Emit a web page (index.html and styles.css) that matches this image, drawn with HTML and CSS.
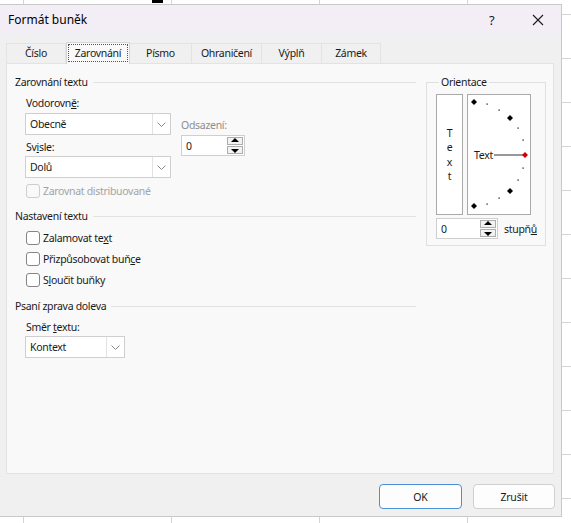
FILE: index.html
```html
<!DOCTYPE html>
<html lang="cs">
  <head>
    <meta charset="UTF-8" />
    <title>Formát buněk</title>
    <link rel="stylesheet" href="styles.css">
  </head>
  <body>
    <div class="sheet-mark"></div>
    <div class="dialog">
      <div class="titlebar">
        <span class="title">Formát buněk</span>
        <span class="help">?</span>
        <span class="close">
          <svg width="12" height="12" viewBox="0 0 12 12"><path d="M1 1L11 11M11 1L1 11" stroke="#1a1a1a" stroke-width="1.1" fill="none"/></svg>
        </span>
      </div>

      <div class="tabs">
        <div class="tab">Číslo</div>
        <div class="tab active"><span class="focus">Zarovnání</span></div>
        <div class="tab">Písmo</div>
        <div class="tab">Ohraničení</div>
        <div class="tab">Výplň</div>
        <div class="tab">Zámek</div>
      </div>

      <div class="panel">
        <div class="left">
          <div class="group-title"><span>Zarovnání textu</span></div>
          <div class="label first">Vodorovn<u>ě</u>:</div>
          <div class="align-row">
            <div class="align-col">
              <div class="select wide">
                <span class="value">Obecně</span>
                <span class="arrow"><svg width="9" height="5" viewBox="0 0 9 5"><path d="M0.5 0.5L4.5 4.5L8.5 0.5" stroke="#8a8a8a" fill="none"/></svg></span>
              </div>
              <div class="label vert">Sv<u>i</u>sle:</div>
              <div class="select wide">
                <span class="value">Dolů</span>
                <span class="arrow"><svg width="9" height="5" viewBox="0 0 9 5"><path d="M0.5 0.5L4.5 4.5L8.5 0.5" stroke="#8a8a8a" fill="none"/></svg></span>
              </div>
              <div class="check disabled"><span class="box"></span>Zarovnat distribuované</div>
            </div>
            <div class="indent-col">
              <div class="label muted">Odsazení:</div>
              <div class="spin indent">
                <span class="value">0</span>
                <span class="spin-btns">
                  <span class="spin-btn"><svg width="8" height="6" viewBox="0 0 8 6"><path d="M4 0L8 4H0Z" fill="#000"/></svg></span>
                  <span class="spin-btn"><svg width="8" height="6" viewBox="0 0 8 6"><path d="M0 2H8L4 6Z" fill="#000"/></svg></span>
                </span>
              </div>
            </div>
          </div>

          <div class="group-title second"><span>Nastavení textu</span></div>
          <div class="check first-check"><span class="box"></span>Zalamovat te<u>x</u>t</div>
          <div class="check"><span class="box"></span>Přizpůsobovat buň<u>c</u>e</div>
          <div class="check"><span class="box"></span>S<u>l</u>oučit buňky</div>

          <div class="group-title third"><span>Psaní zprava doleva</span></div>
          <div class="label dir">Směr <u>t</u>extu:</div>
          <div class="select narrow">
            <span class="value">Kontext</span>
            <span class="arrow"><svg width="9" height="5" viewBox="0 0 9 5"><path d="M0.5 0.5L4.5 4.5L8.5 0.5" stroke="#8a8a8a" fill="none"/></svg></span>
          </div>
        </div>

        <fieldset class="orient">
          <legend>Orientace</legend>
          <div class="orient-boxes">
            <div class="vtext">
              <span>T</span><span>e</span><span>x</span><span>t</span>
            </div>
            <div class="dial">
              <svg width="62" height="119" viewBox="1 1 62 119">
                <g fill="#000">
                  <path d="M7 5L10 8L7 11L4 8Z"/>
                  <path d="M43 21L46 24L43 27L40 24Z"/>
                  <path d="M43 94L46 97L43 100L40 97Z"/>
                  <path d="M7 109L10 112L7 115L4 112Z"/>
                  <rect x="19.5" y="9.5" width="1.2" height="1.2"/>
                  <rect x="31.5" y="15.5" width="1.2" height="1.2"/>
                  <rect x="50.5" y="33.5" width="1.2" height="1.2"/>
                  <rect x="55.5" y="45.5" width="1.2" height="1.2"/>
                  <rect x="55.5" y="73.5" width="1.2" height="1.2"/>
                  <rect x="50.5" y="85.5" width="1.2" height="1.2"/>
                  <rect x="31.5" y="103.5" width="1.2" height="1.2"/>
                  <rect x="19.5" y="109.5" width="1.2" height="1.2"/>
                </g>
                <line x1="27" y1="61" x2="56" y2="61" stroke="#333" stroke-width="1"/>
                <path d="M58 58L61 61L58 64L55 61Z" fill="#d40000"/>
                <text x="7" y="65" class="dial-text">Text</text>
              </svg>
            </div>
          </div>
          <div class="degree-row">
            <div class="spin degrees">
              <span class="value">0</span>
              <span class="spin-btns">
                <span class="spin-btn"><svg width="8" height="6" viewBox="0 0 8 6"><path d="M4 0L8 4H0Z" fill="#000"/></svg></span>
                <span class="spin-btn"><svg width="8" height="6" viewBox="0 0 8 6"><path d="M0 2H8L4 6Z" fill="#000"/></svg></span>
              </span>
            </div>
            <span class="unit">stupň<u>ů</u></span>
          </div>
        </fieldset>
      </div>

      <div class="buttons">
        <button class="btn default">OK</button>
        <button class="btn">Zrušit</button>
      </div>
    </div>
  </body>
</html>
```

FILE: styles.css
```css
* {
  box-sizing: border-box;
}

body {
  margin: 0;
  font-family: "Noto Sans", "DejaVu Sans", sans-serif;
  font-size: 10.5px;
  letter-spacing: -0.3px;
  color: #1a1a1a;
  background-color: #fff;
  background-image:
    linear-gradient(to right, #d4d4d4 1px, transparent 1px),
    linear-gradient(to bottom, #d4d4d4 1px, transparent 1px);
  background-size: 148px 100%, 100% 44px;
  background-position: 23px 0, 0 14px;
  height: 523px;
  overflow: hidden;
}

.sheet-mark {
  position: absolute;
  left: 152px;
  top: 0;
  width: 11px;
  height: 3px;
  background: #000;
}

.dialog {
  margin-top: 4px;
  margin-left: -1px;
  width: 563px;
  height: 513px;
  border: 1px solid #c9c9c9;
  background: #f0f0f0;
}

.titlebar {
  height: 29px;
  background: #f3eef6;
  display: flex;
  align-items: center;
  padding-left: 8px;
}

.title {
  font-size: 12px;
  letter-spacing: 0;
  color: #000;
  flex-grow: 1;
}

.help {
  font-size: 13px;
  letter-spacing: 0;
  color: #1a1a1a;
  width: 43px;
}

.close {
  width: 29px;
  display: flex;
}

/* tabs */

.tabs {
  display: flex;
  margin-top: 9px;
  padding-left: 6px;
  height: 20px;
}

.tab {
  height: 20px;
  line-height: 19px;
  text-align: center;
  border: 1px solid #e3e3e3;
  border-bottom: none;
  border-left: none;
  background: #f0f0f0;
}

.tab:first-child {
  border-left: 1px solid #e3e3e3;
}

.tab:nth-child(1) { width: 60px; }
.tab:nth-child(2) { width: 64px; }
.tab:nth-child(3) { width: 62px; }
.tab:nth-child(4) { width: 70px; }
.tab:nth-child(5) { width: 60px; }
.tab:nth-child(6) { width: 59px; }

.tab.active {
  background: #f9f9f9;
  border: 1px solid #d6d6d6;
  border-bottom: none;
  height: 22px;
  margin-top: -1px;
  margin-bottom: -1px;
  padding: 1px;
  position: relative;
}

.focus {
  display: block;
  height: 18px;
  line-height: 17px;
  border: 1px dotted #555;
}

/* panel */

.panel {
  margin-left: 6px;
  width: 548px;
  height: 411px;
  background: #f9f9f9;
  border: 1px solid #e3e3e3;
  display: flex;
  padding-top: 10px;
}

.left {
  width: 409px;
  padding-left: 8px;
}

.group-title {
  display: flex;
  align-items: center;
  height: 16px;
}

.group-title::after {
  content: "";
  flex-grow: 1;
  border-top: 1px solid #e2e2e2;
  margin-left: 5px;
}

.group-title.second {
  margin-top: 10px;
}

.group-title.third {
  margin-top: 11px;
}

.label {
  height: 16px;
  line-height: 16px;
  margin-left: 11px;
}

.label.first {
  margin-top: 5px;
}

.label.vert {
  margin-top: 4px;
  margin-bottom: 1px;
}

.label.dir {
  margin-top: 5px;
}

.label.muted {
  color: #8e8e8e;
  margin-left: 0;
}

.align-row {
  display: flex;
  margin-top: 2px;
  margin-left: 10px;
}

.align-col {
  width: 156px;
}

.align-col .check {
  margin-left: 1px;
  margin-top: 6px;
}

.indent-col {
  padding-top: 4px;
}

.select {
  height: 22px;
  background: #fff;
  border: 1px solid #cfcfcf;
  display: flex;
  align-items: center;
}

.select.wide {
  width: 146px;
}

.select.narrow {
  width: 100px;
  margin-left: 10px;
  margin-top: 1px;
}

.select.wide + .label.vert {
  margin-left: 1px;
}

.value {
  flex-grow: 1;
  padding-left: 4px;
}

.arrow {
  width: 18px;
  height: 20px;
  border-left: 1px solid #e2e2e2;
  display: flex;
  align-items: center;
  justify-content: center;
}

/* spin boxes */

.spin {
  height: 21px;
  background: #fff;
  border: 1px solid #cfcfcf;
  display: flex;
  align-items: center;
}

.spin.indent {
  width: 64px;
  margin-top: 2px;
}

.spin-btns {
  display: flex;
  flex-direction: column;
  gap: 1px;
  margin-right: 1px;
}

.spin-btn {
  width: 16px;
  height: 8px;
  border: 1px solid #adadad;
  background: #f2f2f2;
  display: flex;
  align-items: center;
  justify-content: center;
}

/* checkboxes */

.check {
  display: flex;
  align-items: center;
  height: 14px;
  margin-left: 11px;
  margin-top: 7px;
}

.check.first-check {
  margin-top: 7px;
}

.box {
  width: 14px;
  height: 14px;
  border: 1px solid #858585;
  border-radius: 3px;
  background: #fff;
  margin-right: 3px;
}

.check.disabled {
  color: #a3a3a3;
}

.check.disabled .box {
  border-color: #cdcdcd;
  background: #f9f9f9;
}

/* orientation */

.orient {
  margin: 0 0 0 10px;
  width: 120px;
  height: 172px;
  border: 1px solid #e0e0e0;
  padding: 4px 0 0 9px;
}

.orient legend {
  padding: 0 2px;
  margin-left: 3px;
  line-height: 16px;
}

.orient-boxes {
  display: flex;
  gap: 4px;
}

.vtext {
  width: 27px;
  height: 121px;
  border: 1px solid #a9a9a9;
  background: #fff;
  display: flex;
  flex-direction: column;
  align-items: center;
  justify-content: center;
  line-height: 14.5px;
}

.dial {
  width: 64px;
  height: 121px;
  border: 1px solid #a9a9a9;
  background: #fff;
}

.dial svg {
  display: block;
}

.dial-text {
  font-family: "Noto Sans", "DejaVu Sans", sans-serif;
  font-size: 10.5px;
  letter-spacing: -0.3px;
  fill: #1a1a1a;
}

.degree-row {
  display: flex;
  align-items: center;
  margin-top: 3px;
}

.spin.degrees {
  width: 62px;
}

.unit {
  margin-left: 6px;
}

/* buttons */

.buttons {
  display: flex;
  justify-content: flex-end;
  gap: 11px;
  margin-top: 10px;
  padding-right: 6px;
}

.btn {
  width: 82px;
  height: 25px;
  font-family: "Noto Sans", "DejaVu Sans", sans-serif;
  font-size: 10.5px;
  letter-spacing: -0.2px;
  color: #1a1a1a;
  background: #fdfdfd;
  border: 1px solid #d0d0d0;
  border-radius: 4px;
}

.btn.default {
  width: 83px;
  border-color: #4b8fd6;
}
```
